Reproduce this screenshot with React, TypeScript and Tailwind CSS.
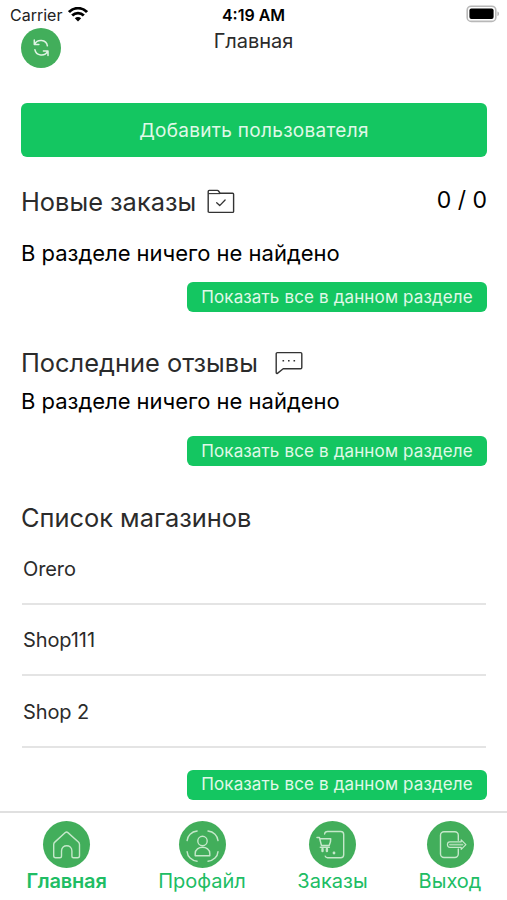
import React from 'react';

type Tab = {
  label: string;
  width: string;
  active?: boolean;
  icon: React.ReactNode;
};

const shops = ['Orero', 'Shop111', 'Shop 2'];

const WifiIcon: React.FC = () => (
  <svg width="20" height="15" viewBox="0 0 20 15" fill="none" stroke="#000" strokeWidth="2.8">
    <path d="M1 5.1C6-.1 14-.1 19 5.1" />
    <path d="M4.2 8.5c3.2-3.3 8.4-3.3 11.6 0" />
    <path d="M10 14.6 6.8 11.3c1.8-1.8 4.6-1.8 6.4 0Z" fill="#000" stroke="none" />
  </svg>
);

const BatteryIcon: React.FC = () => (
  <svg width="34" height="18" viewBox="0 0 34 18" fill="none">
    <rect x="1.2" y="1.2" width="28.6" height="15.2" rx="4" stroke="#b8b8b8" strokeWidth="1.6" />
    <rect x="3.4" y="3.6" width="24.2" height="10.4" rx="2" fill="#000" />
    <path d="M31.5 6.5c1.8.5 1.8 4 0 4.5Z" fill="#a8a8a8" />
  </svg>
);

const RefreshIcon: React.FC = () => (
  <svg width="40" height="40" viewBox="0 0 40 40" fill="none" stroke="#dff3e3" strokeWidth="1.5" strokeLinecap="round" strokeLinejoin="round">
    <path d="M13.3 12v4.4h4.6M13.8 16.1c2.5-5.3 11.5-4.8 12.6 1.7" />
    <path d="M27 27.5v-4.4h-4.6M26.5 23.4c-2.5 5.3-11.5 4.8-12.6-1.7" />
  </svg>
);

const FolderIcon: React.FC = () => (
  <svg width="28" height="26" viewBox="0 0 28 26" fill="none" stroke="#333" strokeWidth="1.4" strokeLinejoin="round">
    <path d="M1.2 4.6V2.4c0-.6.4-1 1-1h8.2c.5 0 .8.2 1.1.6l1.5 2.2h12.6c.6 0 1 .4 1 1v17.2c0 .6-.4 1-1 1H2.2c-.6 0-1-.4-1-1V4.6Z" />
    <path d="M1.2 4.6h12" strokeWidth="1.1" />
    <path d="m9.7 13.8 3 2.8 5.4-5.6" strokeWidth="1.3" strokeLinecap="round" />
  </svg>
);

const CommentIcon: React.FC = () => (
  <svg width="28" height="24" viewBox="0 0 28 24" fill="none" stroke="#333" strokeWidth="1.4" strokeLinejoin="round">
    <path d="M2.4 1.6h23.2c.7 0 1.2.5 1.2 1.2v13.8c0 .7-.5 1.2-1.2 1.2H8.2l-5.8 4.6c-.5.3-1.2.1-1.2-.7V2.8c0-.7.5-1.2 1.2-1.2Z" />
    <path d="M7.5 9.8h1.6M13 9.8h1.6M18.5 9.8h1.6" />
  </svg>
);

const tabIconProps = {
  width: 47,
  height: 47,
  viewBox: '0 0 47 47',
  fill: 'none',
  stroke: '#c5e8ca',
  strokeWidth: 1.4,
  strokeLinecap: 'round',
  strokeLinejoin: 'round',
} as const;

const HomeIcon: React.FC = () => (
  <svg {...tabIconProps}>
    <path d="M22.3 11.6c.8-.7 1.8-.7 2.6 0l10.5 9.5c.8.7 1.1 1.5 1.1 2.5v11.2c0 1.2-.7 1.9-1.9 1.9h-4.2c-1 0-1.5-.5-1.5-1.5V30c0-7-10.4-7-10.4 0v5.2c0 1-.5 1.5-1.5 1.5h-4.4c-1.2 0-1.9-.7-1.9-1.9V23.6c0-1 .3-1.8 1.1-2.5Z" />
  </svg>
);

const ProfileIcon: React.FC = () => (
  <svg {...tabIconProps}>
    <circle cx="23.5" cy="20" r="4.7" />
    <path d="M16.2 34.8v-2.2c0-8.4 14.6-8.4 14.6 0v2.2Z" />
    <path d="M8.1 19.6c.4-5 4.3-9 10-9.6M29 10c5.7.6 9.6 4.6 10 9.6M8.1 30.6c.4 5 4.3 9 10 9.6M29 40.2c5.7-.6 9.6-4.6 10-9.6" />
  </svg>
);

const OrdersIcon: React.FC = () => (
  <svg {...tabIconProps}>
    <path d="M15.6 13c.2-1.6 1.2-2.5 2.9-2.5h13.2c1.8 0 3 1.2 3 3v20.2c0 1.8-1.2 3-3 3H18.5c-1.2 0-2-.6-2.3-1.6" />
    <path d="M8 16.4h2.4l2 8h7.8c.9-1.8 1.6-4.2 1.5-6.7H11" strokeWidth="1.5" />
    <path d="M11.3 26.2h9" strokeWidth="1.5" />
    <path d="M13.5 28v2M17.9 28v2" strokeWidth="2.4" />
    <circle cx="25" cy="32" r="1.4" fill="#c5e8ca" stroke="none" />
  </svg>
);

const ExitIcon: React.FC = () => (
  <svg {...tabIconProps}>
    <path d="M31.3 19.3v-5c0-1.9-1.6-3.5-3.5-3.5H17c-1.9 0-3.5 1.6-3.5 3.5V33c0 1.9 1.6 3.5 3.5 3.5h10.8c1.9 0 3.5-1.6 3.5-3.5v-5" />
    <path d="M22.9 20.8h11.3v-1.9l4.7 4.7-4.7 4.7v-1.9H22.9c-3.3 0-3.3-5.6 0-5.6Z" strokeWidth="1.2" />
    <path d="M23 23.6h12.5" strokeWidth="1.8" stroke="#a5d9ae" />
  </svg>
);

const tabs: Tab[] = [
  { label: 'Главная', width: 'w-[133px]', active: true, icon: <HomeIcon /> },
  { label: 'Профайл', width: 'w-[138px]', icon: <ProfileIcon /> },
  { label: 'Заказы', width: 'w-[123px]', icon: <OrdersIcon /> },
  { label: 'Выход', width: 'w-[112px]', icon: <ExitIcon /> },
];

const ShowAllButton: React.FC = () => (
  <button className="flex h-[30px] w-[300px] shrink-0 items-center justify-center self-end rounded-[6px] bg-[#14c661] pt-px text-[17px] tracking-[0.14px] whitespace-nowrap text-[#e0f9e8]">
    Показать все в данном разделе
  </button>
);

const App: React.FC = () => {
  return (
    <div className="flex h-[900px] w-[507px] flex-col overflow-hidden bg-white font-['Inter','Noto_Sans',sans-serif] text-[#2b2b2b]">
      <div className="grid h-7 shrink-0 grid-cols-3 items-center pr-[7px] pl-[10px] text-black">
        <div className="flex items-center gap-[6px]">
          <span className="pt-px text-[16px] text-[#222]">Carrier</span>
          <WifiIcon />
        </div>
        <span className="pt-px pr-[3px] text-center text-[16px] font-semibold whitespace-nowrap">4:19 AM</span>
        <div className="flex justify-end">
          <BatteryIcon />
        </div>
      </div>

      <header className="grid h-[75px] shrink-0 grid-cols-[40px_1fr_40px] items-start px-[21px]">
        <button className="h-10 w-10 rounded-full bg-[#42ae5b]">
          <RefreshIcon />
        </button>
        <h1 className="text-center text-[20px] leading-[26px]">Главная</h1>
      </header>

      <main className="flex flex-1 flex-col pr-5 pl-[21px]">
        <button className="h-[54px] shrink-0 rounded-[6px] bg-[#14c661] pt-[3px] text-[19px] tracking-[0.3px] text-[#e0f9e8]">
          Добавить пользователя
        </button>

        <section className="mt-[30px] flex flex-col">
          <div className="flex h-[30px] items-center">
            <h2 className="pt-px text-[25.4px] whitespace-nowrap">Новые заказы</h2>
            <span className="ml-[11px]">
              <FolderIcon />
            </span>
            <span className="mb-[4px] ml-auto text-[23px] text-black">0 / 0</span>
          </div>
          <p className="mt-[21px] h-[30px] text-[22px] leading-[30px] tracking-[-0.02px] text-black">
            В разделе ничего не найдено
          </p>
          <div className="mt-[14px] flex flex-col">
            <ShowAllButton />
          </div>
        </section>

        <section className="mt-[36px] flex flex-col">
          <div className="flex h-[30px] items-center">
            <h2 className="pt-px text-[25.4px] whitespace-nowrap">Последние отзывы</h2>
            <span className="ml-[17px]">
              <CommentIcon />
            </span>
          </div>
          <p className="mt-[8px] h-[30px] text-[22px] leading-[30px] tracking-[-0.02px] text-black">
            В разделе ничего не найдено
          </p>
          <div className="mt-[20px] flex flex-col">
            <ShowAllButton />
          </div>
        </section>

        <section className="mt-[37px] flex flex-col">
          <h2 className="h-[30px] text-[25.4px] leading-[30px]">Список магазинов</h2>
          <ul className="mr-px ml-px flex flex-col">
            {shops.map((shop) => (
              <li
                key={shop}
                className="flex h-[71.5px] items-center border-b-2 border-[#e4e4e4] pt-[2px] pl-px text-[20px] tracking-[-0.1px]"
              >
                {shop}
              </li>
            ))}
          </ul>
          <div className="mt-[22px] flex flex-col">
            <ShowAllButton />
          </div>
        </section>
      </main>

      <nav className="flex h-[89px] shrink-0 border-t-2 border-[#e0e0e0] pt-[8px] text-[#20bd64]">
        {tabs.map((tab) => (
          <button key={tab.label} className={`flex shrink-0 flex-col items-center ${tab.width}`}>
            <span className="h-[47px] w-[47px] rounded-full bg-[#42ae5b]">{tab.icon}</span>
            <span className={`text-[20px] leading-[26px] ${tab.active ? 'font-semibold tracking-[-0.2px]' : ''}`}>
              {tab.label}
            </span>
          </button>
        ))}
      </nav>
    </div>
  );
};

export default App;
